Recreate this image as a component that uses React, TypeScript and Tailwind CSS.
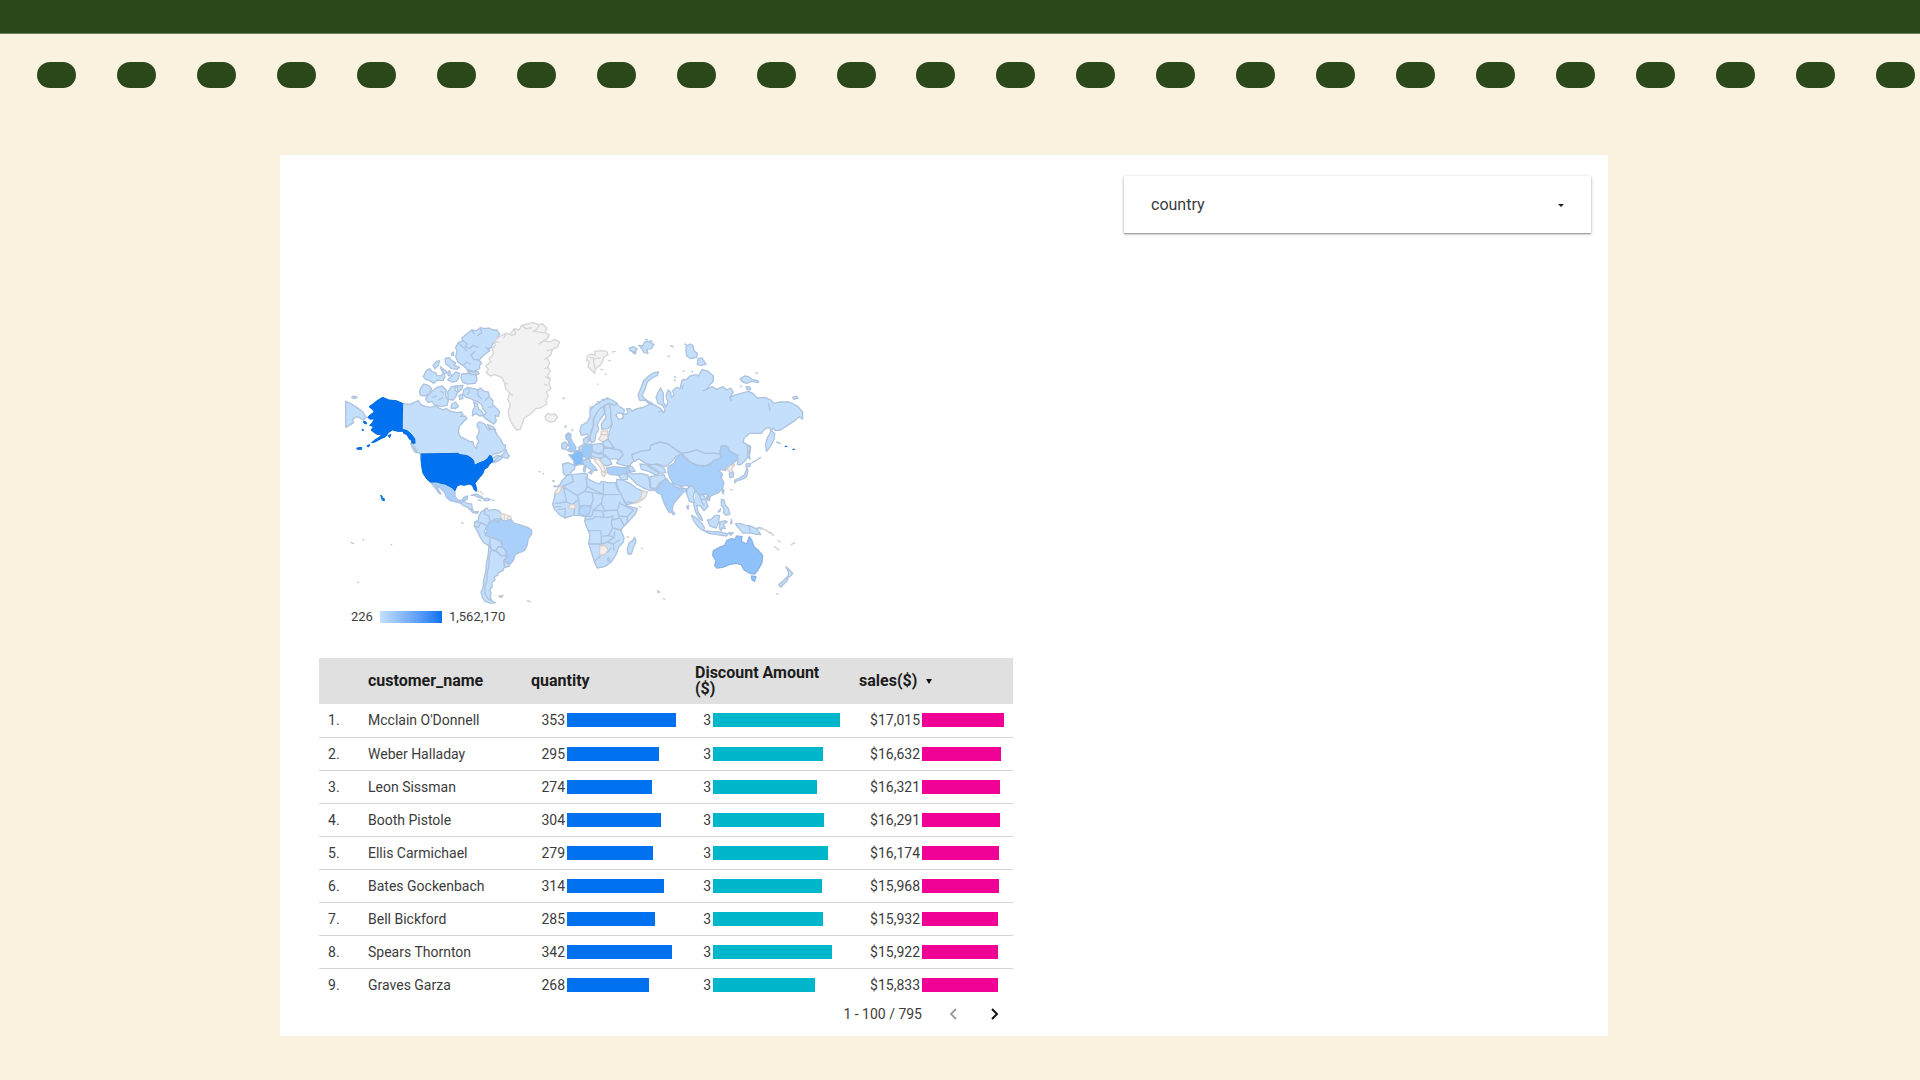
import React from "react";

const LAND = "#c3dffc";
const NONE = "#f2f2f2";

type Shape = { d: string; f?: string; s?: string };

/* Northern half of the Americas */
const northWest: Shape[] = [
  { d: "M202 280L225 283 250 272 258 284 272 290 290 292 300 287 312 294 325 300 333 295 345 303 365 308 380 306 384 314 376 320 390 318 396 326 384 336 373 350 370 366 376 380 392 388 403 394 414 396 418 410 425 416 426 402 432 396 425 382 430 372 433 360 426 348 429 338 436 336 449 342 455 352 462 360 474 354 480 362 487 376 497 388 503 402 512 406 510 420 496 428 478 432 468 438 474 444 486 436 494 438 488 450 474 458 468 448 462 440 448 454 436 460 418 466 414 448 400 438 370 432 260 432 248 428 240 414 230 408 228 400 240 398 236 384 218 364 202 358Z" },
  { d: "M500 436L510 426 513 418 517 430 523 438 518 445 504 442Z" },
  { d: "M491 440L500 438 500 446 488 454 476 458 482 450Z" },
  { d: "M228 400L234 402 240 418 247 428 240 426 231 412Z" },
  { d: "M395 72L410 60 424 62 436 53 450 56 462 54 474 60 486 60 494 72 484 88 472 104 470 112 460 116 464 122 446 136 432 150 440 160 434 166 434 176 416 184 396 178 384 166 370 158 362 140 366 126 362 112 370 98 384 92 380 84Z" },
  { d: "M384 92L396 102 390 110 404 116 414 106 430 112M370 98L380 108 396 122M432 150L416 148 408 136 420 124M384 166L396 156 406 162M436 53L440 68 428 76M410 60L418 72M464 122L452 112", f: "none" },
  { d: "M380 192L396 190 424 196 426 210 420 220 398 222 384 218 378 204Z M396 182L414 186 428 184 432 192 410 194Z" },
  { d: "M330 146L342 142 350 152 362 158 358 166 374 172 366 178 350 176 344 170 332 162Z" },
  { d: "M265 200L274 182 284 176 292 186 302 188 306 196 318 198 326 186 330 200 324 212 308 210 296 220 284 212 272 208Z" },
  { d: "M294 166L304 154 314 152 310 166 300 176Z M350 130L356 126 356 136 350 136Z M338 186L344 182 348 194 340 198Z M352 196L362 186 374 190 370 206 364 214 350 216 338 210Z M316 170L324 176 320 182Z M320 178L330 180 336 188 328 192Z" },
  { d: "M258 232L266 222 280 226 290 236 284 250 270 258 256 256 254 244Z" },
  { d: "M276 258L292 244 306 232 322 228 334 240 332 256 340 272 336 286 316 290 298 284 292 274 280 278 272 268Z" },
  { d: "M292 262L304 258 M310 270L322 264 M318 244L326 250", f: "none" },
  { d: "M338 246L350 230 362 228 360 240 368 248 362 260 354 270 340 268Z M364 228L384 226 380 238 370 246Z M350 282L362 276 370 290 360 296 348 294Z M372 256L382 252 384 266 374 268Z" },
  { d: "M386 240L398 232 416 236 430 240 436 234 448 244 460 246 464 262 474 272 472 282 486 296 494 306 490 320 480 316 484 334 476 342 464 334 452 326 444 318 454 308 444 298 440 284 430 276 418 272 404 264 392 262 384 252Z" },
  { d: "M398 232L404 246 396 254 M430 240L428 256 440 266 M460 262L450 272 M472 290L460 292", f: "none" },
  { d: "M416 276L428 282 430 296 440 304 446 316 434 318 422 310 412 318 414 300 420 290Z" },
  { d: "M458 344L474 350 482 360 470 358 460 352Z" },
  { d: "M32 274L46 280 62 290 76 300 84 306 88 314 94 322 86 330 78 326 66 320 52 328 56 338 46 344 32 352Z M50 262L58 258 66 262 58 266Z" },
  { d: "M545 360L536 350 528 336 522 320 520 302 526 284 518 268 524 250 512 236 508 218 500 202 480 194 466 198 454 188 460 178 452 166 468 156 462 146 476 130 472 116 482 104 478 92 496 78 514 70 524 74 538 56 552 60 560 46 578 42 594 38 612 44 624 42 636 56 630 68 642 74 640 84 626 92 644 96 660 88 674 96 666 112 652 118 648 134 636 144 644 158 638 172 646 184 638 196 646 208 642 222 648 236 634 246 640 258 632 270 636 282 616 294 602 296 590 308 578 318 568 324 562 340 556 358Z", f: NONE, s: "#d6d6d6" },
  { d: "M478 92L492 98 M514 70L506 84 M538 56L542 72 528 76 M560 46L572 56 590 54 M612 44L606 58 594 64 626 68 M626 92L612 102 M652 118L638 122 M632 200L640 206 M628 222L636 226 M524 250L532 256 M508 218L518 222 M636 144L628 148 M638 172L630 176", f: "none", s: "#d6d6d6" },
  { d: "M630 320L638 310 648 314 660 312 668 322 658 334 644 336 634 330Z", f: NONE, s: "#d6d6d6" },
  { d: "M684 264L688 266 M690 348L692 352", s: "#c8ccd2" },
  { d: "M692 376L700 368 708 376 704 388 694 386Z M682 400L692 396 694 410 684 416 680 408Z" },
];

const usa =
  "M202 280L184 272 162 270 143 262 126 272 114 282 102 290 112 298 118 306 106 314 98 322 106 328 118 326 112 338 104 346 116 350 108 360 118 368 128 374 142 372 132 382 116 392 110 398 120 396 138 386 152 380 160 368 172 360 188 364 204 364 206 370 216 374 222 386 230 392 230 399 240 400 239 386 228 372 216 362 202 358Z " +
  "M66 414L80 412 80 418 68 418Z M98 406L104 404 102 410 98 410Z M86 334L94 336 94 342 88 340Z M82 358L86 360 84 362Z M160 376L168 374 164 382Z " +
  "M259 432L370 430 374 434 396 437 408 444 416 452 418 466 434 458 446 454 458 446 464 436 470 440 474 454 464 462 458 472 448 478 444 490 436 500 426 512 420 520 424 532 424 544 418 540 412 526 402 522 388 526 376 524 366 528 360 542 352 534 342 528 330 522 318 520 306 516 286 516 276 508 264 490 260 470 258 448Z " +
  "M138 556L142 560 140 564Z M142 564L148 566 148 572 142 570Z";

/* Central and South America */
const southWest: Shape[] = [
  { d: "M286 124L304 128 318 130 330 132 342 138 352 144 360 152 360 168 368 180 380 182 386 172 398 168 396 178 388 182 384 190 378 190 364 186 346 182 334 172 330 160 320 148 308 138 304 134 312 152 318 162 312 160 302 146 294 136Z", f: "#a9d0fb" },
  { d: "M378 190L386 184 396 190 410 192 412 206 404 208 398 202 384 196Z M404 208L412 208 418 216 430 214 428 220 414 218Z" },
  { d: "M408 166L424 162 440 170 446 176 430 172 418 166Z M446 178L456 174 466 178 460 182 448 182Z M430 180L438 182 M472 180L476 181" },
  { d: "M426 148L430 156 M436 154L444 164", s: "#d6d6d6" },
  { d: "M430 232L438 216 450 208 456 204 462 212 478 208 492 212 500 222 498 236 490 244 476 240 466 250 454 262 448 276 462 286 470 296 464 306 462 318 446 308 436 292 424 268 418 258 420 246 430 240Z" },
  { d: "M450 208L448 222 462 228 464 246 M418 258L430 262 438 248 454 256 M420 246L438 248 M498 236L482 236 476 240", f: "none" },
  { d: "M496 222L508 222 528 230 530 242 518 244 500 242Z M508 222L508 242 M518 226L518 244", f: NONE, s: "#dcd3cc" },
  { d: "M454 262L462 248 474 242 488 246 498 236 506 244 526 238 532 244 538 250 560 256 578 262 590 270 590 282 580 296 576 318 568 332 548 340 540 346 536 360 526 372 516 366 508 362 518 348 512 334 500 322 500 304 480 296 466 292 450 284 456 274Z", f: "#a9d0fb" },
  { d: "M466 292L480 296 498 306 502 320 490 320 484 332 470 330 464 312Z" },
  { d: "M484 332L490 320 504 322 512 334 514 346 500 348Z M508 366L520 372 524 378 512 382 506 374Z" },
  { d: "M462 316L470 330 482 334 500 348 516 346 506 364 508 382 504 392 490 398 488 406 478 410 480 420 470 428 472 440 464 450 468 460 466 472 472 484 482 488 468 490 450 484 442 472 438 456 444 444 446 420 452 396 454 372 460 340Z" },
  { d: "M468 332L462 352 462 376 456 400 456 420 450 440 450 460 458 476 470 482", f: "none" },
  { d: "M492 468L504 466 500 472 494 472Z M578 482L586 486 M48 308L56 310 M84 298L86 300 M168 314L170 314 M68 426L70 428 M380 248L384 250 M612 94L616 96 M624 100L626 102 M656 122L658 124 M656 138L664 138 M670 136L676 140", s: "#c3c9d2" },
];

/* Europe and northern Asia */
const northEast: Shape[] = [
  { d: "M212 276L232 284 254 300 250 312 234 308 228 316 236 328 250 324 248 314 264 310 260 296 270 296 276 304 290 296 310 292 330 282 346 286 362 296 370 308 376 300 368 286 354 280 348 262 356 244 362 234 370 250 370 276 378 290 384 276 378 258 384 240 392 246 394 262 402 256 398 242 410 232 420 236 426 210 440 208 450 198 468 194 476 198 486 178 504 184 520 198 520 214 508 226 500 238 516 230 530 238 550 230 560 240 572 234 580 246 570 262 582 256 602 250 626 244 638 250 652 264 676 262 692 270 702 280 720 276 748 276 772 288 788 306 788 328 778 320 764 332 746 344 722 360 706 362 700 354 694 362 704 370 702 388 692 408 680 424 676 404 682 384 692 366 690 352 676 356 664 370 630 370 612 384 610 398 622 404 632 412 630 428 618 450 602 464 592 464 594 446 582 434 566 420 560 408 544 410 540 430 520 430 494 430 470 420 442 428 424 430 402 416 384 402 360 396 332 406 330 420 302 424 276 434 288 446 272 462 270 472 252 466 230 460 236 446 248 436 244 424 222 418 210 402 204 388 208 364 216 344 210 316 208 292Z" },
  { d: "M372 308L366 302 356 306 M426 236L430 226 M570 262L574 272 M686 282L690 300 M500 238L490 242", f: "none" },
  { d: "M300 272L294 256 302 236 310 214 326 198 342 188 356 186 352 196 336 204 322 216 314 240 306 256 312 264 322 272 340 282 326 280 314 270Z" },
  { d: "M268 114L282 110 292 118 282 126 270 122Z M296 106L308 108 314 96 326 94 342 104 334 116 320 118 324 130 312 128 306 116Z M278 128L288 126 286 132Z M316 88L322 90 M332 92L336 94 M392 108L400 110 M384 138L388 140 M430 182L432 184 M404 200L406 202 M404 210L406 212 M456 184L458 186 M648 188L652 190 M602 228L604 230" },
  { d: "M438 108L450 102 458 106 462 122 472 130 470 142 452 146 440 138 438 122Z M474 146L486 144 498 162 484 166 472 164Z M434 102L438 104" },
  { d: "M600 206L614 198 626 200 636 208 654 212 656 218 636 214 620 220 608 216Z M618 230L628 230 632 238 622 240Z M758 262L768 258 774 264 762 268Z" },
  { d: "M142 138L152 132 166 136 164 124 184 122 200 124 204 134 190 142 188 154 180 166 166 178 164 190 156 182 144 170 148 154 140 152Z M150 142L166 146 180 144 M160 146L164 174 M182 178L188 180 M194 192L198 192 M206 152L212 152 M216 126L226 124 M172 222L174 224 M68 266L74 264", f: NONE, s: "#d6d6d6" },
  { d: "M150 394L142 372 124 376 120 362 124 346 140 338 150 322 150 298 166 284 182 274 202 264 216 270 232 280 222 286 210 280 196 286 184 294 172 308 160 326 160 348 152 366Z" },
  { d: "M152 298L160 290 M156 294L150 290 M178 280L172 274 M192 272L186 268 M204 270L200 264", f: "none" },
  { d: "M150 382L160 348 162 324 176 300 190 288 194 310 184 324 172 342 176 358 168 372 164 394 154 398Z" },
  { d: "M194 286L206 280 212 298 212 320 216 342 204 356 186 358 184 342 198 322 194 308Z" },
  { d: "M184 364L202 362 204 388 188 396 176 388 182 378Z M184 374L202 374", f: "#eeeef0", s: "#d8cfc8" },
  { d: "M188 396L204 388 214 402 222 412 208 414 192 410Z M192 414L214 416 240 420 250 434 238 448 222 446 208 448 196 436 186 430Z" },
  { d: "M130 388L142 380 146 394 138 404 132 400Z" },
  { d: "M156 404L184 400 192 410 190 426 172 430 156 422Z M156 424L172 432 188 432 196 440 180 444 164 442 152 436Z M180 446L196 438 210 450 216 462 198 468 184 458Z" },
  { d: "M162 446L178 448 186 460 194 474 198 490 188 486 180 472 168 458Z M184 486L196 484 194 500 186 496Z", f: NONE, s: "#dccfc8" },
  { d: "M132 404L154 402 156 422 150 430 154 442 136 444 128 430 126 416Z", f: "#9bcafb" },
  { d: "M86 434L100 434 104 424 118 420 132 432 128 446 132 462 118 464 104 468 100 450Z", f: "#85bdf9" },
  { d: "M116 412L130 404 128 420 118 420Z", f: "#bcdafa" },
  { d: "M80 420L90 414 84 404 86 394 78 386 80 374 92 372 92 384 98 396 108 412 106 422 92 426Z", f: "#a1cdfb" },
  { d: "M66 402L76 396 82 406 76 418 66 416Z M96 358L98 362 M76 348L78 350 M134 450L150 442 160 446" },
  { d: "M68 462L84 458 104 466 104 476 94 486 90 494 76 496 70 490Z" },
  { d: "M128 452L148 446 152 458 164 470 172 482 160 480 154 492 146 488 156 482 142 470 130 464Z M132 470L138 472 134 486 130 482Z", f: "#b3d6fc" },
  { d: "M200 474L222 470 244 472 266 474 270 488 254 494 236 496 212 494 202 488Z", f: "#a9d0fb" },
  { d: "M262 466L276 470 286 484 272 484Z" },
  { d: "M276 434L302 424 330 420 332 406 360 396 384 402 404 416 424 430 406 442 394 456 376 470 352 462 338 464 320 462 304 452 296 446 284 454 278 446Z" },
  { d: "M300 462L318 464 340 480 358 488 350 496 326 484 304 478Z M324 464L350 464 372 474 378 488 362 490 346 478Z" },
  { d: "M424 430L442 428 470 420 494 430 520 430 540 432 544 444 520 452 502 466 474 466 450 456Z" },
  { d: "M384 470L402 460 408 446 426 432 438 448 464 464 490 470 510 464 524 452 544 442 540 424 544 408 562 410 570 424 594 436 590 450 574 466 560 474 556 482 544 478 538 484 548 492 544 504 552 518 548 534 536 548 516 556 508 562 498 552 480 556 464 548 456 534 440 526 420 530 400 522 390 504 384 490Z", f: "#a9d0fb" },
  { d: "M500 560L510 562 508 572 500 568Z", f: "#a9d0fb" },
  { d: "M560 476L572 466 584 464 574 478 582 490 576 502 568 498 570 486Z", f: "#eceef2", s: "#d8cfc8" },
  { d: "M568 490L578 486 580 500 570 504Z M620 472L624 482 620 500 606 508 592 512 584 518 584 510 598 504 612 496 618 484Z M618 462L632 460 630 470 618 470Z M622 408L630 406 628 430 630 448 624 440Z M636 458L650 450 662 442 M572 538L576 540" },
  { d: "M548 538L552 540 550 552 546 546Z" },
  { d: "M710 396L720 400", f: "none", s: "#8fb8ee" },
  { d: "M736 409L740 409 M759 418L763 418", f: "none", s: "#0072f0" },
];

/* Africa, southern Asia and Oceania */
const southEast: Shape[] = [
  { d: "M260 94L282 102 304 100 324 106 328 122 330 142 344 148 332 152 310 144 292 134 276 118 264 106Z M330 110L352 106 372 104 378 118 362 128 352 146 332 144Z M236 106L252 100 264 108 262 118 244 120Z" },
  { d: "M332 152L346 148 358 130 378 118", f: "none" },
  { d: "M344 150L356 144 364 126 380 116 388 128 402 136 424 146 442 146 440 158 432 154 422 166 410 180 400 192 396 216 388 218 376 198 368 178 364 164 352 158Z", f: "#a9d0fb" },
  { d: "M398 130L412 134 428 142 420 146 402 138Z M398 214L404 220 400 224 396 220Z" },
  { d: "M230 118L248 120 270 130 288 144 306 152 318 160 308 178 284 188 262 194 250 178 238 154 230 132Z M262 186L284 188" },
  { d: "M306 152L322 156 316 172 294 188 280 190 302 176Z", f: "#e4eaf2", s: "#d4d0cc" },
  { d: "M82 106L96 104 128 100 142 102 142 116 158 124 176 132 186 124 206 128 226 128 232 146 244 164 252 184 262 198 292 206 286 222 268 242 250 260 242 272 252 292 250 306 236 322 228 344 214 366 194 380 172 384 164 368 152 330 146 310 150 284 140 262 134 244 136 230 118 226 100 226 74 234 58 224 42 206 38 192 44 172 44 160 58 138 66 122Z" },
  { d: "M96 104L100 124 68 140 44 164 M70 136L74 160 80 186 46 190 M68 140L112 166 134 154 142 140 138 112 M112 166L116 180 96 194 80 186 M134 154L156 158 160 178 154 196 118 198 116 180 M142 140L190 164 190 130 M190 164L236 164 M156 158L190 164 184 190 160 210 156 228 136 230 M184 190L194 212 232 210 240 186 M160 210L196 214 M232 210L236 228 262 230 280 210 240 190 M96 194L104 206 102 226 M118 198L118 226 M136 240L160 236 164 230 206 232 218 228 214 250 218 264 206 286 184 290 182 272 148 272 M218 264L244 270 M216 240L240 234 252 256 M184 290L184 312 148 312 M184 312L202 306 222 292 206 286 M202 306L220 312 238 300 M180 314L180 350 164 362 M180 346L204 336 212 324 M220 312L222 330 M222 292L224 276 M56 208L76 206 74 234 M46 200L62 200 M192 230L186 212 M262 230L262 246", f: "none" },
  { d: "M118 202L134 196 154 200 148 220 134 228 118 222Z", f: "#b3d6fc" },
  { d: "M180 318L196 316 204 330 196 342 184 346 178 340Z M44 160L56 140 66 140 58 160Z M84 200L96 192 108 198 102 206 90 206Z", f: "#f0f0f1", s: "#dccfc8" },
  { d: "M284 292L288 304 280 324 274 342 264 342 262 326 268 308 278 302Z M202 356L208 354 210 362 204 364Z" },
  { d: "M442 146L456 136 466 150 478 166 490 164 498 180 504 200 492 212 482 198 470 196 474 216 484 230 488 242 478 236 466 214 460 188 448 184 440 160Z M466 150L460 168 464 188 M478 166L486 186 492 196 M498 178L484 178" },
  { d: "M440 200L446 196 444 208Z M398 222L402 224" },
  { d: "M454 226L466 232 484 248 494 264 490 272 474 260 462 244Z M492 272L512 274 540 276 564 282 560 288 530 284 506 280Z M502 240L514 238 526 226 538 226 536 248 528 264 510 258Z M540 246L556 242 562 246 550 252 556 266 546 264 544 272 538 264Z M574 238L576 250 572 252Z M586 252L600 250 616 256 632 258 652 268 662 284 644 282 630 278 610 280 596 264Z M628 258L630 280 M566 278L580 278 572 286Z M648 266L660 262 664 268" },
  { d: "M544 178L552 180 556 196 564 204 570 222 558 226 550 218 552 206 544 196Z M534 216L542 206 540 214Z" },
  { d: "M666 264L680 272 M678 270L690 280 M690 276L700 286 M714 302L722 306 M704 320L716 330 M754 314L764 308 M304 324L308 326 M370 476L374 478 M710 462L714 462 M262 290L266 292 M352 452L360 456 354 458Z M298 200L302 202", s: "#d0d0d0" },
  { d: "M520 332L538 322 554 316 560 302 574 296 584 298 590 288 606 290 604 304 620 312 628 290 636 302 642 320 654 330 668 346 666 368 654 390 644 402 630 400 612 390 604 374 588 370 568 374 548 382 530 384 524 376 528 362 518 346Z", f: "#8fc2fa", s: "#8cb3e4" },
  { d: "M634 408L648 410 644 424 636 420Z", f: "#8fc2fa", s: "#8cb3e4" },
  { d: "M738 380L746 388 758 400 752 408 744 412 746 398Z M742 410L744 418 732 432 722 442 716 434 730 422Z" },
  { d: "M38 122L40 124 M42 140L56 140" },
];

function Shapes({ items }: { items: Shape[] }) {
  return (
    <>
      {items.map((p, i) => (
        <path key={i} d={p.d} fill={p.f ?? LAND} stroke={p.s ?? "#aec3de"} />
      ))}
    </>
  );
}

function WorldMap() {
  return (
    <svg viewBox="0 0 1455 885" className="block h-[295px] w-[485px]" role="img" aria-label="Sales by country" strokeWidth="4" strokeLinejoin="round" strokeLinecap="round">
      <Shapes items={northWest} />
      <g transform="translate(0 390)"><Shapes items={southWest} /></g>
      <g transform="translate(615 0)"><Shapes items={northEast} /></g>
      <g transform="translate(615 390)"><Shapes items={southEast} /></g>
      <path d={usa} fill="#0072f0" stroke="#0069e0" strokeWidth="3" />
    </svg>
  );
}

const rows: [string, number, number, string, number, number][] = [
  ["Mcclain O'Donnell", 353, 109, "$17,015", 127, 82],
  ["Weber Halladay", 295, 92, "$16,632", 110, 79],
  ["Leon Sissman", 274, 85, "$16,321", 104, 78],
  ["Booth Pistole", 304, 94, "$16,291", 111, 78],
  ["Ellis Carmichael", 279, 86, "$16,174", 115, 77],
  ["Bates Gockenbach", 314, 97, "$15,968", 109, 77],
  ["Bell Bickford", 285, 88, "$15,932", 110, 76],
  ["Spears Thornton", 342, 105, "$15,922", 119, 76],
  ["Graves Garza", 268, 82, "$15,833", 102, 76],
];

function BarCell({ value, width, label, bar }: { value: string | number; width: number; label: string; bar: string }) {
  return (
    <td className="p-0">
      <div className="flex items-center gap-0.5">
        <span className={`${label} shrink-0 text-right`}>{value}</span>
        <span className={`${bar} h-[14px] shrink-0`} style={{ width }} />
      </div>
    </td>
  );
}

export default function App() {
  return (
    <div className="min-h-screen bg-[#f9f2df] pb-11 font-['Roboto',sans-serif] text-[#3c3c3c]">
      <header className="h-[34px] border-b border-[#6f7f59] bg-[#2a481a]" />
      <div className="flex justify-between pt-7 pr-[5px] pl-[37px]" aria-hidden="true">
        {Array.from({ length: 24 }, (_, i) => (
          <span key={i} className="h-[26px] w-[39px] rounded-full bg-[#2a481a]" />
        ))}
      </div>

      <main className="mt-[67px] mr-[312px] ml-[280px] bg-white pt-[21px] pb-[9px]">
        <div className="mr-[17px] flex justify-end">
          <div className="relative w-[467px] bg-white shadow-[0_1px_3px_rgba(0,0,0,0.3),0_1px_1px_rgba(0,0,0,0.22)]">
            <select aria-label="country" className="block h-[57px] w-full appearance-none bg-transparent pl-[27px] text-base text-[#3c3c3c]">
              <option>country</option>
            </select>
            <svg viewBox="0 0 6 3" className="pointer-events-none absolute top-[28px] right-[27px] h-[3px] w-[6px]" fill="#222"><path d="M0 0h6L3 3z" /></svg>
          </div>
        </div>

        <section className="mt-[77px] pl-[55px]">
          <WorldMap />
          <div className="flex h-6 items-center pl-4 text-[13px]">
            <span>226</span>
            <span className="mr-[7px] ml-[7px] h-3 w-[62px] bg-linear-to-r from-[#c3dffc] to-[#0072f0]" />
            <span>1,562,170</span>
          </div>
        </section>

        <section className="mt-[29px] ml-[39px] w-[694px]">
          <table className="w-full table-fixed border-collapse text-sm">
            <colgroup>
              <col className="w-[40px]" />
              <col className="w-[163px]" />
              <col className="w-[164px]" />
              <col className="w-[164px]" />
              <col className="w-[163px]" />
            </colgroup>
            <thead className="bg-[#e0e0e0] text-left text-base leading-4 text-[#1c1c1c]">
              <tr className="h-[46px]">
                <th className="p-0" aria-label="Rank" />
                <th className="p-0 pl-[9px] font-bold">customer_name</th>
                <th className="p-0 pl-[9px] font-bold">quantity</th>
                <th className="p-0 pr-[25px] pl-[9px] font-bold">Discount Amount ($)</th>
                <th className="p-0 pl-[9px] font-bold">
                  <button type="button" className="flex items-center gap-[9px] leading-4 font-bold">
                    sales($)
                    <svg viewBox="0 0 6 5" className="h-[5px] w-[6px]" fill="#111"><path d="M0 0h6L3 5z" /></svg>
                  </button>
                </th>
              </tr>
            </thead>
            <tbody>
              {rows.map(([name, qty, qw, sales, dw, sw], i) => (
                <tr key={name} className="h-[33px] border-b border-[#d4d4d8] last:border-b-0">
                  <td className="p-0 pl-[9px]">{i + 1}.</td>
                  <td className="p-0 pl-[9px]">{name}</td>
                  <BarCell value={qty} width={qw} label="w-[43px]" bar="bg-[#0072f0]" />
                  <BarCell value={3} width={dw} label="w-[25px]" bar="bg-[#00b6cb]" />
                  <BarCell value={sales} width={sw} label="w-[70px]" bar="bg-[#f10096]" />
                </tr>
              ))}
            </tbody>
          </table>
          <div className="flex h-[26px] items-center justify-end text-sm">
            <span>1 - 100 / 795</span>
            <button type="button" aria-label="Previous page" className="ml-[26px] flex w-[10px] justify-center text-[#999]">
              <svg viewBox="0 0 8 12" className="h-3 w-2" fill="none" stroke="currentColor" strokeWidth="1.8"><path d="M7 1L2 6l5 5" /></svg>
            </button>
            <button type="button" aria-label="Next page" className="mr-[13px] ml-[32px] flex w-[10px] justify-center text-[#111]">
              <svg viewBox="0 0 8 12" className="h-3 w-2" fill="none" stroke="currentColor" strokeWidth="2"><path d="M1 1l5 5-5 5" /></svg>
            </button>
          </div>
        </section>
      </main>
    </div>
  );
}
